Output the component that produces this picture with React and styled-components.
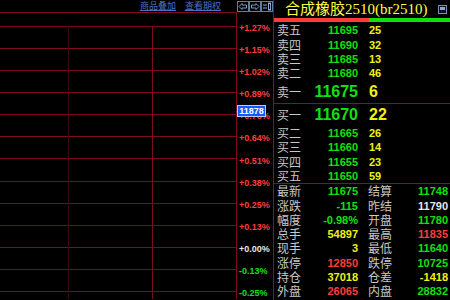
import React from "react";
import styled, { createGlobalStyle } from "styled-components";

const GlobalStyle = createGlobalStyle`
  html, body { margin: 0; padding: 0; background: #000; }
  body { font-family: "Liberation Sans", "Noto Sans CJK SC", sans-serif; }
`;

const RED = "#ff3c3c";
const GREEN = "#10e010";
const YELLOW = "#f0f018";
const WHITE = "#e8e8e8";
const GRID = "#7e0c1c";
const PANEL_LINE = "#8a1212";

const Screen = styled.div`
  width: 450px;
  height: 300px;
  background: #000;
  display: flex;
  overflow: hidden;
`;

const LeftPane = styled.div`
  width: 273px;
  display: flex;
  flex-direction: column;
`;

const TopBar = styled.div`
  height: 13px;
  display: flex;
  justify-content: flex-end;
  align-items: flex-start;
`;

const Links = styled.div`
  display: flex;
  gap: 9px;
  margin-right: 16px;
`;

const LinkText = styled.span`
  font-family: "Noto Sans CJK SC", sans-serif;
  font-size: 9px;
  line-height: 12px;
  color: #4a72c4;
  text-decoration: underline;
`;

const NavGroup = styled.div`
  display: flex;
  margin-top: 1px;
`;

const NavButton = styled.div`
  width: 12px;
  height: 11px;
  box-sizing: border-box;
  border: 1px solid #5a7eb0;
  display: flex;
  align-items: center;
  justify-content: center;
`;

const Body = styled.div`
  flex: 1;
  display: flex;
`;

const Axis = styled.div`
  width: 36px;
  position: relative;
  padding-top: 5px;
  display: flex;
  flex-direction: column;
`;

const AxisLabel = styled.div`
  height: 22.08px;
  display: flex;
  align-items: center;
  padding-left: 2px;
  font-size: 9px;
  line-height: 10px;
  font-weight: bold;
  color: ${(p) => p.$color};
`;

const PriceTag = styled.div`
  position: absolute;
  left: 0;
  top: 93px;
  width: 29px;
  height: 12px;
  box-sizing: border-box;
  background: #1458ff;
  border: 1px solid #b8c8ff;
  color: #fff;
  font-size: 9px;
  font-weight: bold;
  line-height: 10px;
  text-align: center;
`;

const RightPane = styled.div`
  width: 176px;
  border-left: 1px solid ${PANEL_LINE};
  display: flex;
  flex-direction: column;
`;

const TitleRow = styled.div`
  height: 18px;
  display: flex;
  align-items: center;
  justify-content: space-between;
  padding: 0 3px 0 11px;
`;

const Title = styled.span`
  font-family: "Liberation Serif", "Noto Sans CJK SC", serif;
  font-size: 15px;
  color: #ffff48;
  line-height: 16px;
`;

const RatioBar = styled.div`
  height: 4px;
  display: flex;
  margin-bottom: 1px;
`;

const RatioPart = styled.div`
  background: ${(p) => p.$color};
  width: ${(p) => p.$width};
  flex: ${(p) => (p.$width ? "none" : 1)};
`;

const BookRow = styled.div`
  height: ${(p) => (p.$big ? 22 : 14.4)}px;
  display: grid;
  grid-template-columns: 30px 54px 1fr;
  align-items: center;
`;

const Separator = styled.div`
  height: 1px;
  background: ${PANEL_LINE};
`;

const Label = styled.span`
  display: block;
  font-family: "Noto Sans CJK SC", sans-serif;
  font-size: 12px;
  color: #c8c8c8;
  padding-left: ${(p) => (p.$second ? 10 : 3)}px;
  line-height: 12px;
`;

const Num = styled.span`
  display: block;
  font-size: ${(p) => (p.$big ? 16 : 11)}px;
  line-height: ${(p) => (p.$big ? 17 : 12)}px;
  font-weight: bold;
  color: ${(p) => p.$color};
  text-align: ${(p) => (p.$left ? "left" : "right")};
  padding-left: ${(p) => (p.$left ? 11 : 0)}px;
  padding-right: ${(p) => (p.$pad ? 2 : 0)}px;
`;

const StatRow = styled.div`
  height: 14.3px;
  display: grid;
  grid-template-columns: 30px 54px 36px 1fr;
  align-items: center;
`;

const axisLabels = [
  ["+1.27%", RED], ["+1.15%", RED], ["+1.02%", RED], ["+0.89%", RED],
  ["+0.76%", RED], ["+0.64%", RED], ["+0.51%", RED], ["+0.38%", RED],
  ["+0.25%", RED], ["+0.13%", RED], ["+0.00%", WHITE], ["-0.13%", GREEN],
  ["-0.25%", GREEN],
];

const sells = [
  ["卖五", "11695", "25"],
  ["卖四", "11690", "32"],
  ["卖三", "11685", "13"],
  ["卖二", "11680", "46"],
];

const buys = [
  ["买二", "11665", "26"],
  ["买三", "11660", "14"],
  ["买四", "11655", "23"],
  ["买五", "11650", "59"],
];

const stats = [
  ["最新", "11675", GREEN, "结算", "11748", GREEN],
  ["涨跌", "-115", GREEN, "昨结", "11790", WHITE],
  ["幅度", "-0.98%", GREEN, "开盘", "11780", GREEN],
  ["总手", "54897", YELLOW, "最高", "11835", RED],
  ["现手", "3", YELLOW, "最低", "11640", GREEN],
  ["涨停", "12850", RED, "跌停", "10725", GREEN],
  ["持仓", "37018", YELLOW, "仓差", "-1418", YELLOW],
  ["外盘", "26065", RED, "内盘", "28832", GREEN],
];

function ChartGrid() {
  const rows = Array.from({ length: 13 }, (_, i) => 14 + i * 22.08);
  return (
    <svg width="237" height="287" style={{ display: "block" }}>
      <line x1="0" y1="0.5" x2="236" y2="0.5" stroke={GRID} />
      {rows.map((y) => (
        <line key={y} x1="0" y1={Math.round(y) + 0.5} x2="236" y2={Math.round(y) + 0.5} stroke={GRID} />
      ))}
      <line x1="68.5" y1="14" x2="68.5" y2="287" stroke="#3a0a0a" />
      <line x1="152.5" y1="14" x2="152.5" y2="287" stroke={GRID} />
      <line x1="236.5" y1="0" x2="236.5" y2="287" stroke={GRID} />
    </svg>
  );
}

function NavIcon({ kind }) {
  const c = "#8aa8d4";
  return (
    <svg width="10" height="9" viewBox="0 0 10 9">
      {kind === "left" && <path d="M1 4.5 L4 1.5 V3 H8.5 V6 H4 V7.5 Z" fill="none" stroke={c} strokeWidth="0.9" />}
      {kind === "right" && <path d="M9 4.5 L6 1.5 V3 H1.5 V6 H6 V7.5 Z" fill="none" stroke={c} strokeWidth="0.9" />}
      {kind === "bars" && (
        <g stroke={c} strokeWidth="1">
          <line x1="1" y1="3" x2="5" y2="3" />
          <line x1="1" y1="6" x2="5" y2="6" />
          <rect x="6.5" y="1" width="2" height="7" fill="none" />
        </g>
      )}
    </svg>
  );
}

function WindowIcon() {
  return (
    <svg width="9" height="9" viewBox="0 0 9 9">
      <rect x="0.5" y="0.5" width="8" height="8" fill="#0a1020" stroke="#7090c0" />
      <rect x="2" y="2" width="5" height="3" fill="#8aa8d4" />
    </svg>
  );
}

export default function App() {
  return (
    <Screen>
      <GlobalStyle />
      <LeftPane>
        <TopBar>
          <Links>
            <LinkText>商品叠加</LinkText>
            <LinkText>查看期权</LinkText>
          </Links>
          <NavGroup>
            <NavButton><NavIcon kind="left" /></NavButton>
            <NavButton><NavIcon kind="right" /></NavButton>
            <NavButton><NavIcon kind="bars" /></NavButton>
          </NavGroup>
        </TopBar>
        <Body>
          <ChartGrid />
          <Axis>
            {axisLabels.map(([t, c]) => (
              <AxisLabel key={t} $color={c}>{t}</AxisLabel>
            ))}
            <PriceTag>11878</PriceTag>
          </Axis>
        </Body>
      </LeftPane>

      <RightPane>
        <TitleRow>
          <Title>合成橡胶2510(br2510)</Title>
          <WindowIcon />
        </TitleRow>
        <RatioBar>
          <RatioPart $color="#ff3a3a" $width="95px" />
          <RatioPart $color="#10e010" />
        </RatioBar>

        {sells.map(([l, p, v]) => (
          <BookRow key={l}>
            <Label>{l}</Label>
            <Num $color={GREEN}>{p}</Num>
            <Num $color={YELLOW} $left>{v}</Num>
          </BookRow>
        ))}
        <BookRow $big>
          <Label>卖一</Label>
          <Num $color={GREEN} $big>11675</Num>
          <Num $color={YELLOW} $big $left>6</Num>
        </BookRow>
        <Separator />
        <BookRow $big>
          <Label>买一</Label>
          <Num $color={GREEN} $big>11670</Num>
          <Num $color={YELLOW} $big $left>22</Num>
        </BookRow>
        {buys.map(([l, p, v]) => (
          <BookRow key={l}>
            <Label>{l}</Label>
            <Num $color={GREEN}>{p}</Num>
            <Num $color={YELLOW} $left>{v}</Num>
          </BookRow>
        ))}
        <Separator />
        {stats.map(([l1, v1, c1, l2, v2, c2]) => (
          <StatRow key={l1}>
            <Label>{l1}</Label>
            <Num $color={c1}>{v1}</Num>
            <Label $second>{l2}</Label>
            <Num $color={c2} $pad>{v2}</Num>
          </StatRow>
        ))}
      </RightPane>
    </Screen>
  );
}
